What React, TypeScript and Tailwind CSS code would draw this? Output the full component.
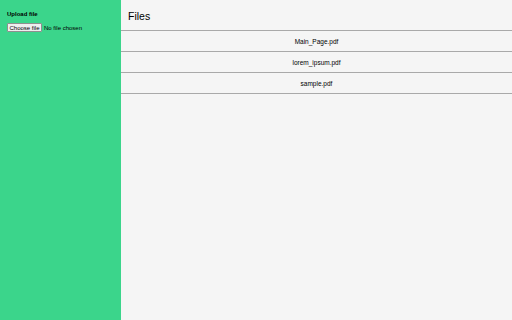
import React from "react";

const files = ["Main_Page.pdf", "lorem_ipsum.pdf", "sample.pdf"];

export default function App() {
  return (
    <div
      className="flex w-[512px] h-[320px] bg-[#f5f5f5] text-black"
      style={{ fontFamily: '"Liberation Sans", Arial, sans-serif' }}
    >
      <aside className="w-[121px] shrink-0 bg-[#3bd58b] px-[7px] pt-[10px]">
        <div className="text-[6px] font-bold leading-[8px]">Upload file</div>
        <label className="mt-[5px] flex items-center gap-[2px] text-[6px] leading-none cursor-pointer">
          <input type="file" className="hidden" />
          <span className="flex h-[9px] w-[35px] items-center justify-center rounded-[1px] border border-[#8f8f8f] bg-[#efefef]">
            Choose file
          </span>
          <span>No file chosen</span>
        </label>
      </aside>
      <main className="flex-1">
        <h1 className="h-[30px] flex items-center pl-[7px] pt-[3px] text-[10.5px] leading-none">Files</h1>
        <div className="border-t border-[#a9a9a9]">
          {files.map((f) => (
            <div
              key={f}
              className="h-[21px] flex items-center justify-center border-b border-[#a9a9a9] pt-[1px] text-[6.5px]"
            >
              {f}
            </div>
          ))}
        </div>
      </main>
    </div>
  );
}
